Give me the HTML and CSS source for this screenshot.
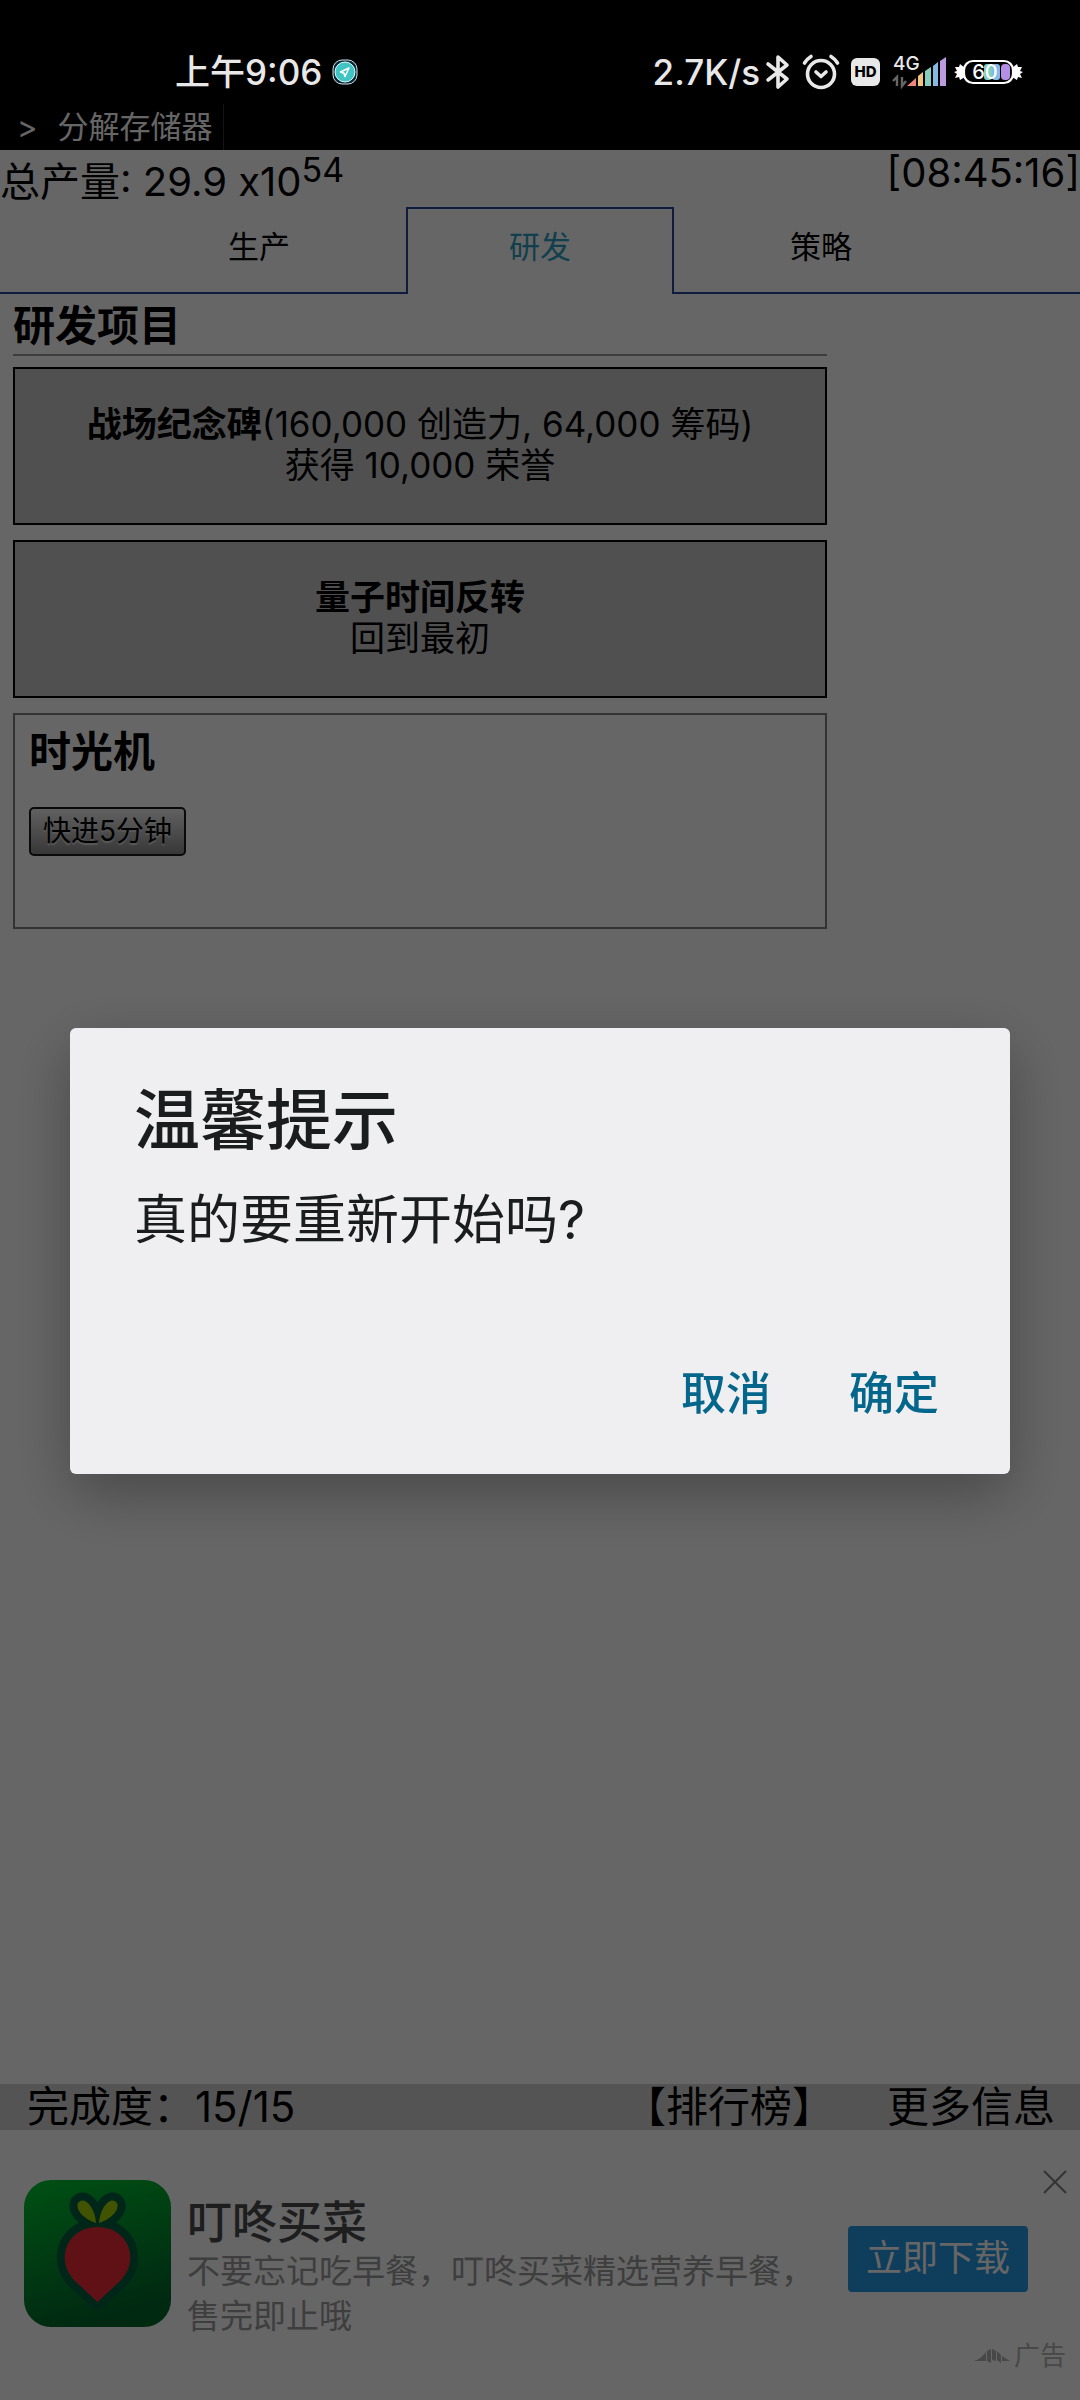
FILE: index.html
```html
<!DOCTYPE html>
<html lang="zh-CN">
<head>
  <meta charset="UTF-8">
  <meta name="viewport" content="width=device-width, initial-scale=1.0">
  <title>研发</title>
  <link rel="stylesheet" href="styles.css">
</head>
<body>
  <!-- 状态栏 -->
  <div class="status-bar">
    <div class="status-left">
      <span>上午9:06</span>
      <svg width="26" height="26" viewBox="0 0 26 26">
        <rect x="1" y="1" width="24" height="24" rx="9" fill="#0b2a3c" stroke="#cfe3e6" stroke-width="1"/>
        <circle cx="13" cy="13" r="10" fill="#3fc6c4" stroke="#e6ffff" stroke-width="1"/>
        <path d="M17 9 L8.5 13 L12 14.3 L13 17.5 Z" fill="none" stroke="#fff" stroke-width="1.5" stroke-linejoin="round"/>
      </svg>
    </div>
    <div class="status-right">
      <span>2.7K/s</span>
      <svg width="24" height="36" viewBox="0 0 24 36" fill="none" stroke="#e8e8e8" stroke-width="3.6" stroke-linejoin="round" stroke-linecap="round">
        <path d="M2 10 L21 25 L12 33 V3 L21 11 L2 26"/>
      </svg>
      <svg class="alarm" width="38" height="36" viewBox="0 0 38 36" fill="none" stroke="#e8e8e8" stroke-width="3.6" stroke-linecap="round" stroke-linejoin="round">
        <circle cx="19" cy="20" r="13.5"/>
        <path d="M14 18 L19 22.5 L24 18"/>
        <path d="M2.5 9 Q5 5 9 2.5 M35.5 9 Q33 5 29 2.5"/>
      </svg>
      <svg class="hd" width="29" height="28" viewBox="0 0 29 28">
        <rect width="29" height="28" rx="6" fill="#e8e8e8"/>
        <text x="14.5" y="19" text-anchor="middle" class="hd-text">HD</text>
      </svg>
      <svg class="signal" width="55" height="44" viewBox="0 -4 55 44">
        <path d="M1 27 L5 23 V32 M10 23 V32 L14 27" fill="none" stroke="#666" stroke-width="2.4"/>
        <path d="M15 32 L24 24 V32 Z" fill="#f0857a"/>
        <path d="M26 32 V22 L31 18 V32 Z" fill="#f4c57c"/>
        <path d="M33 32 V17 L39 13 V32 Z" fill="#86cdbd"/>
        <path d="M41 32 V12 L46 8 V32 Z" fill="#83b9e4"/>
        <path d="M48 32 V7 L54 3 V32 Z" fill="#bb9ae0"/>
        <text x="1" y="16" class="net-text">4G</text>
      </svg>
      <svg class="battery" width="69" height="26" viewBox="0 0 69 26">
        <path d="M11 9 L6 5 L5 8 L1 8 L3 12 L0 13 L3 15 L1 19 L5 18 L6 21 L11 18 Z" fill="#fff"/>
        <path d="M58 9 L63 5 L64 8 L68 8 L66 12 L69 13 L66 15 L68 19 L64 18 L63 21 L58 18 Z" fill="#fff"/>
        <rect x="10" y="2" width="49" height="22" rx="9" fill="#000" stroke="#fff" stroke-width="2.2"/>
        <rect x="30" y="5" width="8" height="16" rx="3" fill="#7fcfc0"/>
        <rect x="38" y="5" width="8" height="16" rx="3" fill="#83b9e4"/>
        <rect x="47" y="5" width="9" height="16" rx="4" fill="#b58fe6"/>
        <text x="31" y="20" text-anchor="middle" class="battery-text">60</text>
      </svg>
    </div>
  </div>

  <!-- 消息 -->
  <div class="news">
    <span>&gt;</span>
    <span class="news-item">分解存储器</span>
  </div>

  <div class="summary">
    <div class="total">总产量: 29.9 x10<sup>54</sup></div>
    <div class="clock">[08:45:16]</div>
  </div>

  <nav class="tabs">
    <a class="tab" href="#produce">生产</a>
    <a class="tab active" href="#research">研发</a>
    <a class="tab" href="#strategy">策略</a>
  </nav>

  <main class="content">
    <h2>研发项目</h2>
    <hr>
    <button class="project"><b>战场纪念碑</b>(160,000 创造力, 64,000 筹码)<br>获得 10,000 荣誉</button>
    <button class="project"><b>量子时间反转</b><br>回到最初</button>
    <section class="machine">
      <h2>时光机</h2>
      <button class="forward-button">快进5分钟</button>
    </section>
  </main>

  <div class="footer">
    <span>完成度：15/15</span>
    <a class="rank" href="#rank">【排行榜】</a>
    <a href="#more">更多信息</a>
  </div>

  <!-- 广告 -->
  <div class="ad">
    <svg class="ad-icon" width="147" height="147" viewBox="0 0 147 147">
      <defs>
        <linearGradient id="green" x1="0" y1="0" x2="0.3" y2="1">
          <stop offset="0" stop-color="#00c832"/>
          <stop offset="1" stop-color="#00682c"/>
        </linearGradient>
      </defs>
      <rect width="147" height="147" rx="27" fill="url(#green)"/>
      <g fill="#006040" stroke="#006040" stroke-width="16" stroke-linejoin="round">
        <path d="M73.500 122 L51 101 C30 80 43 47 73.500 47 C104 47 117 80 96 101 Z"/>
        <path d="M72 43 C60 39 51 30 54 23 C60 15 71 27 72 43 Z"/>
        <path d="M75 43 C87 39 96 30 93 23 C87 15 76 27 75 43 Z"/>
      </g>
      <path d="M73.500 122 L51 101 C30 80 43 47 73.500 47 C104 47 117 80 96 101 Z" fill="#f02c38"/>
      <path d="M72 43 C60 39 51 30 54 23 C60 15 71 27 72 43 Z" fill="#a6d000"/>
      <path d="M75 43 C87 39 96 30 93 23 C87 15 76 27 75 43 Z" fill="#a6d000"/>
    </svg>
    <div class="ad-text">
      <div class="ad-title">叮咚买菜</div>
      <div class="ad-desc">不要忘记吃早餐，叮咚买菜精选营养早餐，售完即止哦</div>
    </div>
    <button class="ad-download">立即下载</button>
    <button class="ad-close" aria-label="关闭">
      <svg width="22" height="22" viewBox="0 0 22 22" stroke="#808080" stroke-width="2">
        <path d="M0 0 L22 22 M22 0 L0 22"/>
      </svg>
    </button>
    <div class="ad-mark">
      <svg width="36" height="16" viewBox="0 0 36 16" fill="#b4b4b4">
        <path d="M0 13 Q7 11 12 4 V13 Z M13 3 L17 1 V15 L13 13 Z M18 1 L22 3 V13 L18 12 Z M23 3 L27 7 V15 L23 12 Z M28 8 L36 13 H28 Z"/>
      </svg>
      <span>广告</span>
    </div>
  </div>

  <!-- 提示框 -->
  <div class="overlay">
    <div class="dialog" role="dialog" aria-labelledby="dialogTitle">
      <h1 id="dialogTitle">温馨提示</h1>
      <p>真的要重新开始吗?</p>
      <div class="dialog-buttons">
        <button>取消</button>
        <button>确定</button>
      </div>
    </div>
  </div>
</body>
</html>
```
FILE: styles.css
```css
* {
  box-sizing: border-box;
}
body {
  margin: 0;
  min-height: 100vh;
  display: flex;
  flex-direction: column;
  background-color: #fff;
  color: #000;
  font-family: Inter, "Noto Sans CJK SC", sans-serif;
  font-size: 42px;
  line-height: 46px;
}
a {
  color: inherit;
  text-decoration: none;
}
button {
  font-family: inherit;
  color: inherit;
  cursor: pointer;
}
svg {
  display: block;
  flex: none;
  overflow: visible;
}
h1, h2, p {
  margin: 0;
}

/* 状态栏 */
.status-bar {
  position: relative;
  z-index: 20;
  display: flex;
  justify-content: space-between;
  padding: 48px 57px 8px 175px;
  background-color: #000;
  color: #e8e8e8;
  font-size: 35px;
  font-weight: 500;
  line-height: 48px;
}
.status-left, .status-right {
  display: flex;
  align-items: center;
}
.status-left {
  gap: 10px;
}
.status-right > span {
  margin-right: 6px;
}
.alarm {
  margin-left: 12px;
}
.hd {
  margin-left: 11px;
}
.signal {
  margin-left: 12px;
}
.battery {
  margin-left: 7px;
}
.hd-text {
  font-size: 15px;
  font-weight: 800;
  fill: #000;
}
.net-text {
  font-size: 19px;
  fill: #e8e8e8;
}
.battery-text {
  font-size: 20px;
  fill: #fff;
}

.news {
  display: flex;
  gap: 20px;
  padding: 0 17px;
  background-color: #000;
  color: #fff;
  font-size: 31px;
  line-height: 46px;
}
.news-item {
  padding-right: 10px;
  border-right: 1px solid #333;
}

.summary {
  display: flex;
  justify-content: space-between;
  height: 57px;
  font-size: 40px;
}
.total {
  line-height: 64px;
}
.total sup {
  font-size: 34px;
  line-height: 0;
}

/* 标签页 */
.tabs {
  display: flex;
  justify-content: center;
  gap: 13px;
  border-bottom: 2px solid #24469a;
}
.tab {
  width: 268px;
  height: 85px;
  font-size: 31px;
  line-height: 80px;
  text-align: center;
}
.tab.active {
  height: 87px;
  margin-bottom: -2px;
  border: 2px solid #24469a;
  border-bottom: none;
  background-color: #fff;
  color: #2f9fc0;
  line-height: 76px;
}

.content {
  flex: 1;
  width: 100%;
  max-width: 840px;
  padding: 9px 13px;
}
h2 {
  font-size: 42px;
  line-height: 46px;
}
hr {
  margin: 5px 0 11px;
  border: none;
  border-top: 2px solid #999;
}
.project {
  display: block;
  width: 100%;
  height: 158px;
  margin-bottom: 15px;
  padding: 0 10px 3px;
  border: 2px solid #000;
  background-color: #c8c8c8;
  font-size: 35px;
  line-height: 41px;
}
.machine {
  height: 216px;
  padding: 14px;
  border: 2px solid #808080;
}
.forward-button {
  height: 49px;
  margin-top: 32px;
  padding: 0 12px 2px;
  border: 2px solid #1a1a1a;
  border-radius: 5px;
  background: linear-gradient(#f2f2f2, #8c8c8c);
  font-size: 28px;
  line-height: 40px;
  text-shadow: 0 2px 1px #ddd;
}

.footer {
  display: flex;
  padding: 0 25px 0 27px;
  background-color: #d3d3d3;
}
.rank {
  margin-left: auto;
  margin-right: 53px;
}

/* 广告 */
.ad {
  position: relative;
  display: flex;
  align-items: flex-start;
  height: 270px;
  padding: 50px 52px 0 24px;
}
.ad-text {
  flex: 1;
  margin: 17px 32px 0 16px;
}
.ad-title {
  color: #4d4d4d;
  font-size: 45px;
  font-weight: 500;
  line-height: 52px;
}
.ad-desc {
  color: #9c9c9c;
  font-size: 33px;
  line-height: 45px;
}
.ad-download {
  width: 180px;
  height: 66px;
  margin-top: 46px;
  padding: 0 0 8px;
  border: none;
  border-radius: 4px;
  background-color: #2698e6;
  color: #fff;
  font-size: 36px;
}
.ad-close {
  position: absolute;
  top: 41px;
  right: 14px;
  padding: 0;
  border: none;
  background: none;
}
.ad-mark {
  position: absolute;
  right: 14px;
  bottom: 28px;
  display: flex;
  align-items: center;
  gap: 4px;
  color: #b4b4b4;
  font-size: 26px;
  line-height: 32px;
}

/* 提示框 */
.overlay {
  position: fixed;
  inset: 0;
  z-index: 10;
  display: flex;
  align-items: center;
  padding: 102px 70px 0;
  background-color: rgba(0, 0, 0, 0.6);
}
.dialog {
  width: 100%;
  padding: 56px 64px 44px;
  border-radius: 6px;
  background-color: #efeff1;
  box-shadow: 0 20px 60px rgba(0, 0, 0, 0.3);
  color: #1a1c1e;
}
.dialog h1 {
  font-size: 66px;
  font-weight: 500;
  line-height: 72px;
}
.dialog p {
  margin-top: 32px;
  font-size: 53px;
  line-height: 64px;
}
.dialog-buttons {
  display: flex;
  justify-content: flex-end;
  gap: 78px;
  margin-top: 106px;
  padding-right: 7px;
}
.dialog-buttons button {
  padding: 0;
  border: none;
  background: none;
  color: #05668c;
  font-size: 45px;
  font-weight: 500;
  line-height: 72px;
}
```
